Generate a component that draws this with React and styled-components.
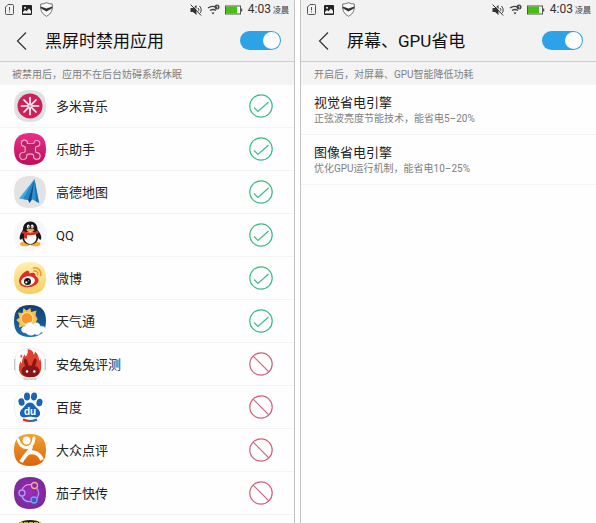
import React, { useState } from 'react';
import styled, { createGlobalStyle } from 'styled-components';

const GlobalStyle = createGlobalStyle`
  *, *::before, *::after { box-sizing: border-box; }
  body {
    margin: 0;
    background: #fff;
    color: #222;
    font-family: Roboto, "Noto Sans CJK SC", sans-serif;
  }
`;

const Screens = styled.main`
  display: grid;
  grid-template-columns: 295fr 296fr;
  column-gap: 5px;
  height: 100vh;
  overflow: hidden;
`;

const Phone = styled.section`
  --inset: ${(p) => (p.$side === 'right' ? '1px' : '0px')};
  min-width: 0;
  overflow: hidden;
  background: #fefefe;
  border: 0 solid #c4c4c4;
  border-width: ${(p) => (p.$side === 'right' ? '0 0 0 1px' : '0 1px 0 0')};
`;

const StatusBar = styled.div`
  display: flex;
  align-items: center;
  justify-content: space-between;
  height: 19px;
  padding: 0 5px 0 calc(5px + var(--inset));
  background: #f2f2f2;
`;

const StatusGroup = styled.div`
  display: flex;
  align-items: center;
  gap: ${(p) => p.$gap}px;
`;

const Clock = styled.time`
  display: flex;
  align-items: baseline;
  gap: 2px;
  color: #333;
  font-size: 12px;
  line-height: 18px;
`;

const Period = styled.span`
  font-size: 8px;
`;

const TitleBar = styled.header`
  display: flex;
  align-items: center;
  height: 43px;
  padding: 1px 13px 0 calc(16px + var(--inset));
  background: #f2f2f2;
  border-bottom: 1px solid #cecece;
`;

const BackButton = styled.button`
  display: flex;
  width: 29px;
  padding: 0;
  border: 0;
  background: none;
  cursor: pointer;
`;

const Title = styled.h1`
  flex: 1;
  margin: 0;
  color: #111;
  font-size: 17px;
  font-weight: 400;
  line-height: 24px;
  white-space: nowrap;
`;

const Switch = styled.input`
  appearance: none;
  display: flex;
  align-items: center;
  justify-content: ${(p) => (p.checked ? 'flex-end' : 'flex-start')};
  width: 41px;
  height: 19px;
  margin: 0;
  padding: 1px;
  border-radius: 10px;
  background: ${(p) => (p.checked ? '#2ba3e6' : '#bbb')};
  cursor: pointer;

  &::before {
    content: "";
    width: 17px;
    height: 17px;
    border-radius: 50%;
    background: #fdfdfd;
  }
`;

const Hint = styled.p`
  margin: 0;
  padding: 5px 12px 2px calc(12px + var(--inset));
  background: #f4f4f4;
  color: #808080;
  font-size: 10px;
  line-height: 16px;
  white-space: nowrap;
`;

const List = styled.ul`
  margin: 0;
  padding: 0;
  list-style: none;
`;

const AppRow = styled.li`
  border-bottom: 1px solid #f3f3f3;
`;

const AppLabel = styled.label`
  display: grid;
  grid-template-columns: 32px 1fr 24px;
  align-items: center;
  column-gap: 10px;
  height: 42px;
  padding: 0 21px 0 14px;
  font-size: 13px;
  line-height: 20px;
  cursor: pointer;
`;

const AppName = styled.span`
  padding-top: 2px;
`;

const Mark = styled.span`
  display: grid;

  & > * { grid-area: 1 / 1; }
`;

const MarkInput = styled.input`
  appearance: none;
  width: 24px;
  height: 24px;
  margin: 0;
  border-radius: 50%;
  cursor: pointer;
`;

const EngineRow = styled.li`
  padding: 9px 12px 8px calc(12px + var(--inset));
  border-bottom: 1px solid #f3f3f3;
`;

const EngineName = styled.h2`
  margin: 0;
  font-size: 13px;
  font-weight: 400;
  line-height: 18px;
`;

const EngineNote = styled.p`
  margin: 0;
  color: #808080;
  font-size: 10px;
  line-height: 14px;
`;

const Icon = styled.svg.attrs({ 'aria-hidden': true })`
  display: block;
  pointer-events: none;
`;

const squircle = 'M16 0C27 0 32 5 32 16S27 32 16 32 0 27 0 16 5 0 16 0Z';

function DuomiIcon() {
  return (
    <Icon width="32" height="32" viewBox="0 0 32 32">
      <path d={squircle} fill="#dde2de" />
      <circle cx="16" cy="16" r="12.5" fill="#cf205b" />
      <g stroke="#fff" strokeWidth="1.7" strokeLinecap="round">
        <path d="M16 7.5v17M7.5 16h17M10 10l12 12M22 10L10 22" />
      </g>
      <circle cx="16" cy="16" r="1.6" fill="#e78aa9" />
    </Icon>
  );
}

function HelperIcon() {
  return (
    <Icon width="32" height="32" viewBox="0 0 32 32">
      <defs>
        <linearGradient id="helper" x2="0" y2="1">
          <stop stopColor="#ea3089" /><stop offset="1" stopColor="#be0d5b" />
        </linearGradient>
      </defs>
      <path d={squircle} fill="url(#helper)" />
      <path d="M13.5 10.500h6.300a3 3 0 1 1 3 3c-.8 0-1.300.5-1.300 1.300v3.500c0 .8.5 1.400 1.300 1.400a3.300 3.300 0 1 1-3.300 3.300c0-1-.5-1.800-1.400-1.800h-4c-.9 0-1.400.8-1.400 1.800a3.500 3.500 0 1 1-3.500-3.500c1.300 0 2-.5 2-1.500v-3.500c0-.8-.5-1.200-1.300-1.200a3.100 3.100 0 1 1 3.600-2.800Z" fill="#bb2466" stroke="#f7a8ca" strokeWidth="1.2" />
    </Icon>
  );
}

function MapIcon() {
  return (
    <Icon width="32" height="32" viewBox="0 0 32 32">
      <path d={squircle} fill="#e2e3e2" />
      <path d="M20.500 3L5 22.500l9 1.500Z" fill="#48a8df" />
      <path d="M20.500 3L9 23l5 1Z" fill="#2486c8" />
      <path d="M20.500 3L14 24l1.500 3L19 22Z" fill="#0b4f8c" />
      <path d="M20.500 3l-3 20 7.500 4Z" fill="#2e90cf" />
      <path d="M20.500 3l1.300 22 3.200 2Z" fill="#176eae" />
    </Icon>
  );
}

function QQIcon() {
  return (
    <Icon width="32" height="32" viewBox="0 0 32 32">
      <path d={squircle} fill="#f7f7fb" />
      <ellipse cx="11" cy="25" rx="5" ry="2.300" fill="#eeb231" />
      <ellipse cx="21.500" cy="25" rx="5" ry="2.300" fill="#eeb231" />
      <path d="M9 11C6.500 14 5 18 6 20.500c1 .5 2-.5 3-2M23.500 11c3 3 4.500 7 3.500 9.500-1 .5-2-.5-3-2" fill="#171717" />
      <path d="M16.300 2.500C12 2.500 9 5.500 9 10.500 7 15 7 25.500 16.300 25.500S25.500 15 23.500 10.500c0-5-3-8-7.200-8Z" fill="#171717" />
      <ellipse cx="16.300" cy="18.500" rx="6.200" ry="6.400" fill="#fff" />
      <path d="M8.500 11.500c4 2.500 11.500 2.500 15.500 0l.7 2.500c-3.500 2-8 2.700-11.700 2v3.700l-3-.4v-4L8 14Z" fill="#d92b26" />
      <ellipse cx="14.300" cy="7.500" rx="1.400" ry="2" fill="#fff" />
      <ellipse cx="18.200" cy="7.500" rx="1.400" ry="2" fill="#fff" />
      <circle cx="14.700" cy="7.800" r=".6" /><circle cx="17.900" cy="7.800" r=".6" />
      <ellipse cx="16.300" cy="11" rx="4" ry="1.200" fill="#efa72f" />
    </Icon>
  );
}

function WeiboIcon() {
  return (
    <Icon width="32" height="32" viewBox="0 0 32 32">
      <defs>
        <linearGradient id="weibo" x2="0" y2="1">
          <stop stopColor="#fff0af" /><stop offset="1" stopColor="#f2cf62" />
        </linearGradient>
      </defs>
      <path d={squircle} fill="url(#weibo)" />
      <path d="M12.500 9c2-.8 3.200.2 2.800 2.500 3-1.300 6.700-1.300 6 2-.2.8 3.200 1.500 3.200 4.800 0 4-5.500 7-11 7S5 22.500 5 19c0-4 4.500-9 7.500-10Z" fill="#df2d26" />
      <ellipse cx="14" cy="19" rx="7" ry="4.700" fill="#fff" transform="rotate(-8 14 19)" />
      <circle cx="13.500" cy="19.500" r="3.500" fill="#171717" />
      <circle cx="12.300" cy="20.300" r="1.100" fill="#fff" /><circle cx="14.700" cy="18.700" r=".5" fill="#fff" />
      <path d="M19.500 6c4.500-1 8.500 3 7 7.500M20 9c2.500-.6 4.300 1.500 3.600 3.700" fill="none" stroke="#ef962e" strokeWidth="1.500" strokeLinecap="round" />
    </Icon>
  );
}

function WeatherIcon() {
  return (
    <Icon width="32" height="32" viewBox="0 0 32 32">
      <defs>
        <linearGradient id="sky" x2="0" y2="1">
          <stop stopColor="#153d70" /><stop offset="1" stopColor="#176fac" />
        </linearGradient>
      </defs>
      <path d={squircle} fill="url(#sky)" />
      <path d="M12.500 5.500l4-2.500.7 4 5.300-1.500-1 4.500 2 4-3 6-8 3-3.500-1.500-4 1 .3-4.500-3-3 3.200-2.500-1.500-5 4.500.5L9.500 3Z" fill="#f3c14d" />
      <circle cx="13" cy="13.500" r="6" fill="#f3962c" stroke="#fbdd85" strokeWidth="1.200" />
      <path d="M12 28c-6 0-6-6.500-.7-6.500.2-4.500 6-5.300 7.700-2 3-3.500 7.500-1 7 2 3.500-1 6 .8 5.500 3.500-.6 2.500-3.500 2.500-4.500 2-1 3-5 3.500-6.500 2C18.500 31 14 30.500 12 28Z" fill="#fcfdff" stroke="#d8e7f1" strokeWidth=".6" />
    </Icon>
  );
}

function AntutuIcon() {
  return (
    <Icon width="32" height="32" viewBox="0 0 32 32">
      <path d="M16 .5C27 .5 31.500 5 31.500 16S27 31.500 16 31.500.5 27 .5 16 5 .5 16 .5Z" fill="#fff" stroke="#ececec" />
      <path d="M.8 11v11M31.200 11v11" stroke="#b5b5b5" />
      <path d="M10 31h12" stroke="#bbb" strokeLinecap="round" />
      <path d="M13.500 1c4 .5 6 2.500 6 5.500 1-.5 1.500-1.500 1.500-3 3 2.500 4 6 4 9 .8-.3 1.200-1 1.200-2 1.300 3.500 1.300 7 .8 11-.7 5-5 8-11 8S5.500 26.500 5 21.500c-.3-3 .2-5.500 1.500-8 .5 1 .7 1.500 1.500 2 0-3.500.5-6.500 2.700-9 .3 1.200.6 1.800 1.300 2 1.500-2.500 2.500-5 1.500-7.500Z" fill="#e0402f" />
      <path d="M6.500 7c1.200-.8 2 0 1.800 1.500-.3 1.300-1.500 1.500-2 .5Z" fill="#e2553e" />
      <path d="M7.500 23.500c0-3 1.500-4.500 4-5.500C9.500 15 9.500 11 11 10.500c2 0 3 4 3.500 7h3.500c.5-3 1.500-7 3.300-7s1.500 4.500-.3 7.500c3 1 4.500 2.500 4.500 5.500 0 3.500-4 5.500-9 5.500s-9-2-9-5.500Z" fill="#861617" />
      <circle cx="13" cy="23.500" r="1.300" fill="#fff" /><circle cx="20.300" cy="23.500" r="1.300" fill="#fff" />
    </Icon>
  );
}

const Du = styled.text`
  font: 700 10px "Liberation Sans", sans-serif;
`;

function BaiduIcon() {
  return (
    <Icon width="32" height="32" viewBox="0 0 32 32">
      <path d="M16 .5C27 .5 31.500 5 31.500 16S27 31.500 16 31.500.5 27 .5 16 5 .5 16 .5Z" fill="#fff" stroke="#f1f1f1" />
      <g fill="#1b63b5">
        <ellipse cx="7.500" cy="11" rx="3" ry="3.800" transform="rotate(-12 7.500 11)" />
        <ellipse cx="13" cy="5.500" rx="3" ry="4" />
        <ellipse cx="20" cy="5.500" rx="3" ry="4" transform="rotate(8 20 5.500)" />
        <ellipse cx="25.500" cy="11.500" rx="3" ry="3.800" transform="rotate(12 25.500 11.500)" />
        <path d="M16 11.500c4 0 4.500 3.500 7 5.500 5 4 3.500 9.500-1 9.500-3 0-3.500-.7-6-.7s-3 .7-6 .7c-4.500 0-6-5.500-1-9.500 2.500-2 3-5.500 7-5.500Z" />
      </g>
      <Du x="16" y="24" textAnchor="middle" fill="#fff">du</Du>
      <path d="M9 28.500q4 1.500 7 1.500" stroke="#d82828" strokeWidth="2" fill="none" />
      <path d="M16 30q4 0 7-1.500" stroke="#2b68b5" strokeWidth="2" fill="none" />
    </Icon>
  );
}

function DianpingIcon() {
  return (
    <Icon width="32" height="32" viewBox="0 0 32 32">
      <defs>
        <linearGradient id="dianping" x2="0" y2="1">
          <stop stopColor="#f0a332" /><stop offset="1" stopColor="#db620d" />
        </linearGradient>
        <clipPath id="tile"><path d={squircle} /></clipPath>
      </defs>
      <path d={squircle} fill="url(#dianping)" />
      <g clipPath="url(#tile)" fill="none" stroke="#fffaf2">
        <path d="M4 5.500C5 10 8.500 14 13 13.500c4-.5 6.500-4 7-9.500" strokeWidth="3" strokeLinecap="round" />
        <path d="M17 12.500c-1 6-6 8-10 15.500M13 19.500c6-3 12.500-.5 15 6.500" strokeWidth="4" />
        <circle cx="12.500" cy="6.500" r="4.500" fill="#fffaf2" stroke="#eda03d" />
      </g>
    </Icon>
  );
}

function ShareIcon() {
  return (
    <Icon width="32" height="32" viewBox="0 0 32 32">
      <defs>
        <radialGradient id="share">
          <stop stopColor="#9c2dba" /><stop offset="1" stopColor="#7a2a9e" />
        </radialGradient>
      </defs>
      <path d={squircle} fill="url(#share)" />
      <g fill="none" strokeWidth="1.300">
        <path d="M8 13c1.500-4 5-6 9.500-5.300" stroke="#ed88da" />
        <path d="M22.500 11c3 3.500 2.500 7.500 0 10.500" stroke="#c18bed" />
        <path d="M17 24.500c-4.500.5-8-1.500-9-5.500" stroke="#8bb6f0" />
        <circle cx="8" cy="16" r="3" stroke="#b69bf5" />
        <circle cx="20.500" cy="8.500" r="3" stroke="#f3ad86" />
        <circle cx="20" cy="23" r="3" stroke="#67a6fa" fill="#4655b0" />
      </g>
    </Icon>
  );
}

function DarkIcon() {
  return (
    <Icon width="32" height="32" viewBox="0 0 32 32">
      <path d={squircle} fill="#222518" />
      <path d="M5 2.500h22" stroke="#c7b53b" strokeWidth="1.200" strokeDasharray="4 1" />
      <path d="M4 5.500h24" stroke="#2f8580" strokeWidth="2" />
    </Icon>
  );
}

function StatusIcons() {
  return (
    <StatusGroup $gap={8}>
      <Icon width="9" height="11" viewBox="0 0 9 11">
        <path d="M3 .5h4.500q1 0 1 1v8q0 1-1 1h-6q-1 0-1-1V3Z" fill="none" stroke="#555" />
        <path d="M4.500 3v3.500M4.500 7.500v1" stroke="#555" />
      </Icon>
      <Icon width="10" height="10" viewBox="0 0 10 10">
        <rect width="10" height="10" rx="1" fill="#222" />
        <path d="M1 7l2-2 1.500 1.200L7 3.500 9 6v2.500H1Z" fill="#f2f2f2" />
        <circle cx="3" cy="2.700" r="1" fill="#f2f2f2" />
      </Icon>
      <Icon width="13" height="15" viewBox="0 0 13 15">
        <path d="M.7 2Q3.500 2 6.500.7 9.500 2 12.300 2 13.500 11 6.500 14.300-.5 11 .7 2Z" fill="#fafafa" stroke="#555" strokeWidth=".8" />
        <path d="M.7 4.500l5.800 2 5.800-2v1.700L6.500 9.500.7 6.200Z" fill="#333" />
      </Icon>
    </StatusGroup>
  );
}

function DeviceIcons() {
  return (
    <StatusGroup $gap={5}>
      <Icon width="12" height="12" viewBox="0 0 12 12">
        <path d="M.5 4H3l3.500-3v10L3 8H.5Z" fill="#333" />
        <path d="M8 4q2 2 0 4M9.500 2q3.500 4 0 8" fill="none" stroke="#444" />
        <path d="M1.800.3l10 10.500" stroke="#f2f2f2" />
        <path d="M.7.700l10.500 10.800" stroke="#333" />
      </Icon>
      <Icon width="13" height="12" viewBox="0 0 13 12">
        <path d="M1 4q4-3 8.500-.5M3 6.500q3-2 6 0" fill="none" stroke="#444" strokeWidth="1.300" />
        <path d="M4.500 8.500h3L6 10.500Z" fill="#333" />
        <circle cx="10" cy="3" r="2.500" fill="#444" />
        <path d="M9.300 2.500L10.500 2v2.500" fill="none" stroke="#ddd" strokeWidth=".7" />
      </Icon>
      <Icon width="18" height="10" viewBox="0 0 18 10">
        <rect x=".5" y="1" width="15" height="8" fill="#fafafa" stroke="#555" />
        <path d="M16.500 3.500v3" stroke="#555" strokeWidth="1.500" />
        <rect x="1" y="1.500" width="11" height="7" fill="#48bf13" />
      </Icon>
      <Clock>4:03<Period>凌晨</Period></Clock>
    </StatusGroup>
  );
}

function PhoneHeader({ title, hint }) {
  const [on, setOn] = useState(true);
  return (
    <>
      <StatusBar>
        <StatusIcons />
        <DeviceIcons />
      </StatusBar>
      <TitleBar>
        <BackButton type="button" aria-label="返回">
          <Icon width="11" height="20" viewBox="0 0 11 20">
            <path d="M10 1.500L1.500 10l8.500 8.500" fill="none" stroke="#333" strokeWidth="1.200" />
          </Icon>
        </BackButton>
        <Title>{title}</Title>
        <Switch type="checkbox" role="switch" aria-label={title} checked={on} onChange={() => setOn(!on)} />
      </TitleBar>
      <Hint>{hint}</Hint>
    </>
  );
}

function AppItem({ name, icon: AppIcon, initial }) {
  const [on, setOn] = useState(initial);
  return (
    <AppRow>
      <AppLabel>
        <AppIcon />
        <AppName>{name}</AppName>
        <Mark>
          <MarkInput type="checkbox" aria-label={name || '应用'} checked={on} onChange={() => setOn(!on)} />
          <Icon width="24" height="24" viewBox="0 0 24 24" fill="none" stroke={on ? '#3cbb83' : '#d0627c'} strokeWidth="1.200">
            <circle cx="12" cy="12" r="11.200" />
            <path d={on ? 'M5 13.500l4 4L19.500 8' : 'M4.200 4.200l15.600 15.600'} />
          </Icon>
        </Mark>
      </AppLabel>
    </AppRow>
  );
}

const apps = [
  { name: '多米音乐', icon: DuomiIcon, initial: true },
  { name: '乐助手', icon: HelperIcon, initial: true },
  { name: '高德地图', icon: MapIcon, initial: true },
  { name: 'QQ', icon: QQIcon, initial: true },
  { name: '微博', icon: WeiboIcon, initial: true },
  { name: '天气通', icon: WeatherIcon, initial: true },
  { name: '安兔兔评测', icon: AntutuIcon, initial: false },
  { name: '百度', icon: BaiduIcon, initial: false },
  { name: '大众点评', icon: DianpingIcon, initial: false },
  { name: '茄子快传', icon: ShareIcon, initial: false },
  { name: '', icon: DarkIcon, initial: false },
];

const engines = [
  { name: '视觉省电引擎', note: '正弦波亮度节能技术，能省电5–20%' },
  { name: '图像省电引擎', note: '优化GPU运行机制，能省电10–25%' },
];

export default function App() {
  return (
    <>
      <GlobalStyle />
      <Screens>
        <Phone $side="left">
          <PhoneHeader title="黑屏时禁用应用" hint="被禁用后，应用不在后台妨碍系统休眠" />
          <List>
            {apps.map((app) => <AppItem key={app.name} {...app} />)}
          </List>
        </Phone>
        <Phone $side="right">
          <PhoneHeader title="屏幕、GPU省电" hint="开启后，对屏幕、GPU智能降低功耗" />
          <List>
            {engines.map((engine) => (
              <EngineRow key={engine.name}>
                <EngineName>{engine.name}</EngineName>
                <EngineNote>{engine.note}</EngineNote>
              </EngineRow>
            ))}
          </List>
        </Phone>
      </Screens>
    </>
  );
}
